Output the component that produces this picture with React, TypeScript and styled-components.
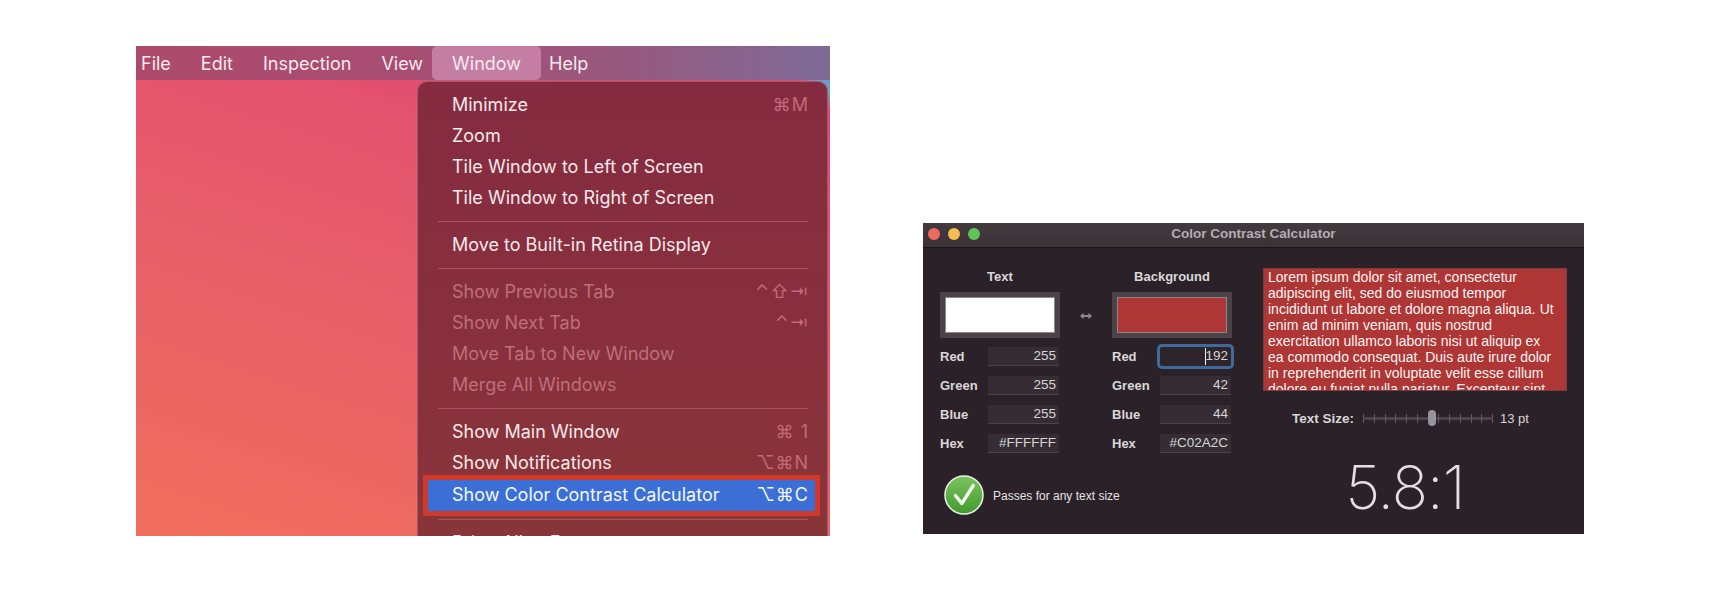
import React from 'react';
import styled, { createGlobalStyle } from 'styled-components';

const GlobalStyle = createGlobalStyle`
  html, body {
    margin: 0;
    padding: 0;
    background: #ffffff;
  }
`;

const Page = styled.div`
  display: flex;
  align-items: flex-start;
  width: 1728px;
  height: 590px;
  padding: 46px 0 0 136px;
  box-sizing: border-box;
  overflow: hidden;
`;

/* left screenshot: desktop with the open Window menu */
const Desktop = styled.div`
  width: 694px;
  height: 490px;
  flex-shrink: 0;
  overflow: hidden;
  display: flex;
  flex-direction: column;
  font-family: Inter, 'Noto Sans', sans-serif;
  background:
    radial-gradient(circle at 100% 7%, #6a9fcb 0, #6a9fcb 1.5%, rgba(106, 159, 203, 0) 3.5%),
    linear-gradient(198deg, #e04a6e 0%, #e2506f 25%, #e96068 60%, #f06e5c 100%);
`;

const MenuBar = styled.div`
  display: flex;
  height: 34px;
  flex-shrink: 0;
  padding-left: 5px;
  background: linear-gradient(90deg, #ad4a6a 0%, #a84e73 40%, #98597f 70%, #7d6a97 100%);
`;

const MenuBarItem = styled.div<{ $active?: boolean }>`
  display: flex;
  align-items: center;
  padding: 0 ${({ $active }) => ($active ? '20px' : '15px')};
  margin: 0 ${({ $active }) => ($active ? '-7px 0 -6px' : '0')};
  border-radius: 5px;
  font-size: 18px;
  color: #f6eaee;
  background: ${({ $active }) => ($active ? '#c47da3' : 'transparent')};

  &:first-child {
    padding-left: 0;
  }
`;

const Menu = styled.div`
  width: 411px;
  margin: 1px 0 0 281px;
  flex-shrink: 0;
  padding: 7px 0 0;
  border: 1px solid #a25a6a;
  border-bottom: none;
  border-radius: 10px 10px 0 0;
  box-sizing: border-box;
  background: linear-gradient(180deg, #852b41 0%, #882f3e 50%, #883638 100%);
`;

const MenuRow = styled.div<{ $disabled?: boolean }>`
  display: flex;
  align-items: center;
  justify-content: space-between;
  height: 31px;
  padding: 0 18px 0 34px;
  font-size: 18px;
  color: ${({ $disabled }) => ($disabled ? '#bd6f7a' : '#f7e9ea')};
`;

const SelectedRow = styled(MenuRow)`
  height: 29px;
  margin: 2px 12px 0 10px;
  padding: 0 6px 2px 24px;
  color: #f4f7fd;
  background: #3b6fd6;
  box-shadow: 0 0 0 5px #cf3a2a;
  position: relative;
`;

const Shortcut = styled.span<{ $bright?: boolean }>`
  font-family: Inter, 'DejaVu Sans', sans-serif;
  font-size: 18px;
  letter-spacing: 1px;
  color: ${({ $bright }) => ($bright ? '#f4f7fd' : '#c46a78')};
`;

const Separator = styled.div`
  height: 1px;
  margin: 7.5px 19px 7.5px 20px;
  background: #a6565f;
`;

/* right screenshot: calculator window */
const Window = styled.div`
  width: 661px;
  height: 311px;
  margin: 177px 0 0 93px;
  flex-shrink: 0;
  display: flex;
  flex-direction: column;
  overflow: hidden;
  font-family: 'Liberation Sans', Arial, sans-serif;
  background: #2a2228;
`;

const TitleBar = styled.div`
  position: relative;
  display: flex;
  align-items: center;
  justify-content: center;
  height: 25px;
  padding-bottom: 3px;
  flex-shrink: 0;
  box-sizing: border-box;
  border-bottom: 1px solid #1a1418;
  background: linear-gradient(180deg, #433a40, #3b3238);
  color: #b3adb0;
  font-size: 13.5px;
  font-weight: 700;
`;

const TrafficLights = styled.div`
  position: absolute;
  left: 5px;
  top: 5px;
  display: flex;
  gap: 8px;
`;

const Light = styled.span<{ $color: string }>`
  width: 12px;
  height: 12px;
  border-radius: 50%;
  background: ${({ $color }) => $color};
`;

const Body = styled.div`
  display: flex;
  padding: 20px 17px 0;
  gap: 29px;
`;

const LeftPane = styled.div`
  width: 294px;
  flex-shrink: 0;
`;

const ColorsRow = styled.div`
  display: flex;
`;

const ColorColumn = styled.div`
  width: 120px;
  flex-shrink: 0;
`;

const Heading = styled.div`
  height: 18px;
  margin-bottom: 6px;
  text-align: center;
  line-height: 18px;
  font-size: 13px;
  font-weight: 700;
  color: #dad7d9;
`;

const Swatch = styled.div<{ $color: string }>`
  height: 46px;
  padding: 5px;
  margin-bottom: 9px;
  box-sizing: border-box;
  background: #4a4246;

  &::after {
    content: '';
    display: block;
    height: 100%;
    box-sizing: border-box;
    border: 1px solid #8d8588;
    background: ${({ $color }) => $color};
  }
`;

const SwapSlot = styled.div`
  width: 52px;
  flex-shrink: 0;
  height: 24px;
  margin-top: 36px;
  display: flex;
  align-items: center;
  justify-content: center;
`;

const Fields = styled.div`
  display: flex;
  flex-direction: column;
  gap: 10px;
`;

const FieldRow = styled.div`
  display: flex;
  align-items: center;
  justify-content: space-between;
  width: 119px;
  height: 19px;
`;

const FieldLabel = styled.span`
  font-size: 13px;
  font-weight: 700;
  color: #dad7d9;
`;

const FieldValue = styled.div<{ $focused?: boolean }>`
  position: relative;
  width: 71px;
  height: 19px;
  box-sizing: border-box;
  padding-right: 3px;
  text-align: right;
  line-height: 18px;
  font-size: 13.5px;
  color: #d8d5d7;
  background: #352d33;
  border-bottom: 1px solid #4b4449;
  ${({ $focused }) =>
    $focused &&
    'box-shadow: 0 0 0 3px #3f6a9b; border-radius: 2px; background: #2d252b; border-bottom: none;'}
`;

const Caret = styled.span`
  position: absolute;
  left: 45px;
  top: 1px;
  width: 1px;
  height: 17px;
  background: #f0f0f0;
`;

const PassRow = styled.div`
  display: flex;
  align-items: center;
  gap: 9px;
  margin: 22px 0 0 4px;
  font-size: 12px;
  color: #e4e2e3;
`;

const PassText = styled.span`
  padding-top: 2px;
`;

const RightPane = styled.div`
  width: 304px;
  flex-shrink: 0;
  display: flex;
  flex-direction: column;
`;

const Preview = styled.div`
  height: 123px;
  box-sizing: border-box;
  padding: 0 8px 0 4px;
  overflow: hidden;
  border: 1px solid #7a3d40;
  background: #ae3635;
  color: #fbf3f3;
  font-size: 14px;
  line-height: 16px;
`;

const SliderRow = styled.div`
  display: flex;
  align-items: center;
  height: 18px;
  margin: 18px 0 0 29px;
  font-size: 13px;
  color: #d8d5d7;
`;

const SliderLabel = styled.span`
  width: 71px;
  font-size: 13.5px;
  font-weight: 700;
`;

const Slider = styled.div`
  position: relative;
  display: flex;
  align-items: center;
  justify-content: space-between;
  width: 130px;
  height: 18px;
  margin-right: 7px;

  &::before {
    content: '';
    position: absolute;
    left: 0;
    right: 0;
    top: 8px;
    height: 3px;
    background: #4c444a;
  }
`;

const Tick = styled.span`
  position: relative;
  width: 1px;
  height: 9px;
  background: #625b60;
`;

const Thumb = styled.span`
  position: absolute;
  left: 65px;
  top: 1px;
  width: 8px;
  height: 16px;
  border-radius: 4px;
  background: #97939a;
`;

const Ratio = styled.div`
  margin-top: 24px;
  padding-right: 20px;
  text-align: center;
  font-family: Inter, 'Liberation Sans', sans-serif;
  font-weight: 250;
  font-size: 60px;
  line-height: 72px;
  letter-spacing: -1px;
  color: #e2dfe1;
`;

const menuGroups = [
  [
    { label: 'Minimize', keys: '⌘M' },
    { label: 'Zoom' },
    { label: 'Tile Window to Left of Screen' },
    { label: 'Tile Window to Right of Screen' },
  ],
  [{ label: 'Move to Built-in Retina Display' }],
  [
    { label: 'Show Previous Tab', keys: '⌃⇧⇥', disabled: true },
    { label: 'Show Next Tab', keys: '⌃⇥', disabled: true },
    { label: 'Move Tab to New Window', disabled: true },
    { label: 'Merge All Windows', disabled: true },
  ],
  [
    { label: 'Show Main Window', keys: '⌘ 1' },
    { label: 'Show Notifications', keys: '⌥⌘N' },
  ],
];

const textFields = [
  ['Red', '255'],
  ['Green', '255'],
  ['Blue', '255'],
  ['Hex', '#FFFFFF'],
];

const backgroundFields = [
  ['Red', '192'],
  ['Green', '42'],
  ['Blue', '44'],
  ['Hex', '#C02A2C'],
];

const lorem =
  'Lorem ipsum dolor sit amet, consectetur adipiscing elit, sed do eiusmod tempor incididunt ut labore et dolore magna aliqua. Ut enim ad minim veniam, quis nostrud exercitation ullamco laboris nisi ut aliquip ex ea commodo consequat. Duis aute irure dolor in reprehenderit in voluptate velit esse cillum dolore eu fugiat nulla pariatur. Excepteur sint occaecat cupidatat non proident.';

const SwapIcon = () => (
  <svg width="12" height="8" viewBox="0 0 12 8" fill="#8f898c">
    <path d="M0 4 3.5 0.8V3h5V0.8L12 4 8.5 7.2V5h-5v2.2z" />
  </svg>
);

const PassIcon = () => (
  <svg width="40" height="40" viewBox="0 0 40 40">
    <defs>
      <linearGradient id="passFill" x1="0" y1="0" x2="0" y2="1">
        <stop offset="0" stopColor="#7cc45c" />
        <stop offset="1" stopColor="#3f9a2e" />
      </linearGradient>
    </defs>
    <circle cx="20" cy="20" r="19" fill="url(#passFill)" stroke="#ecf3e8" strokeWidth="1.5" />
    <path
      d="M11.5 20.5l6.3 8 11.5-18"
      fill="none"
      stroke="#f4f8f1"
      strokeWidth="3.4"
      strokeLinecap="round"
      strokeLinejoin="round"
    />
  </svg>
);

const ColorFields = ({ rows, focusFirst }: { rows: string[][]; focusFirst?: boolean }) => (
  <Fields>
    {rows.map(([label, value], i) => (
      <FieldRow key={label}>
        <FieldLabel>{label}</FieldLabel>
        <FieldValue $focused={focusFirst && i === 0}>
          {focusFirst && i === 0 && <Caret />}
          {value}
        </FieldValue>
      </FieldRow>
    ))}
  </Fields>
);

const App: React.FC = () => (
  <>
    <GlobalStyle />
    <Page>
      <Desktop>
        <MenuBar>
          <MenuBarItem>File</MenuBarItem>
          <MenuBarItem>Edit</MenuBarItem>
          <MenuBarItem>Inspection</MenuBarItem>
          <MenuBarItem>View</MenuBarItem>
          <MenuBarItem $active>Window</MenuBarItem>
          <MenuBarItem>Help</MenuBarItem>
        </MenuBar>
        <Menu>
          {menuGroups.map((group, i) => (
            <React.Fragment key={i}>
              {group.map((item) => (
                <MenuRow key={item.label} $disabled={item.disabled}>
                  <span>{item.label}</span>
                  {item.keys && <Shortcut>{item.keys}</Shortcut>}
                </MenuRow>
              ))}
              {i < menuGroups.length - 1 && <Separator />}
            </React.Fragment>
          ))}
          <SelectedRow>
            <span>Show Color Contrast Calculator</span>
            <Shortcut $bright>⌥⌘C</Shortcut>
          </SelectedRow>
          <Separator />
          <MenuRow>
            <span>Bring All to Front</span>
          </MenuRow>
        </Menu>
      </Desktop>

      <Window>
        <TitleBar>
          <TrafficLights>
            <Light $color="#ee6a5f" />
            <Light $color="#f5bd4f" />
            <Light $color="#61c454" />
          </TrafficLights>
          Color Contrast Calculator
        </TitleBar>
        <Body>
          <LeftPane>
            <ColorsRow>
              <ColorColumn>
                <Heading>Text</Heading>
                <Swatch $color="#ffffff" />
                <ColorFields rows={textFields} />
              </ColorColumn>
              <SwapSlot>
                <SwapIcon />
              </SwapSlot>
              <ColorColumn>
                <Heading>Background</Heading>
                <Swatch $color="#ae3635" />
                <ColorFields rows={backgroundFields} focusFirst />
              </ColorColumn>
            </ColorsRow>
            <PassRow>
              <PassIcon />
              <PassText>Passes for any text size</PassText>
            </PassRow>
          </LeftPane>
          <RightPane>
            <Preview>{lorem}</Preview>
            <SliderRow>
              <SliderLabel>Text Size:</SliderLabel>
              <Slider>
                {Array.from({ length: 13 }, (_, i) => (
                  <Tick key={i} />
                ))}
                <Thumb />
              </Slider>
              13 pt
            </SliderRow>
            <Ratio>5.8:1</Ratio>
          </RightPane>
        </Body>
      </Window>
    </Page>
  </>
);

export default App;
